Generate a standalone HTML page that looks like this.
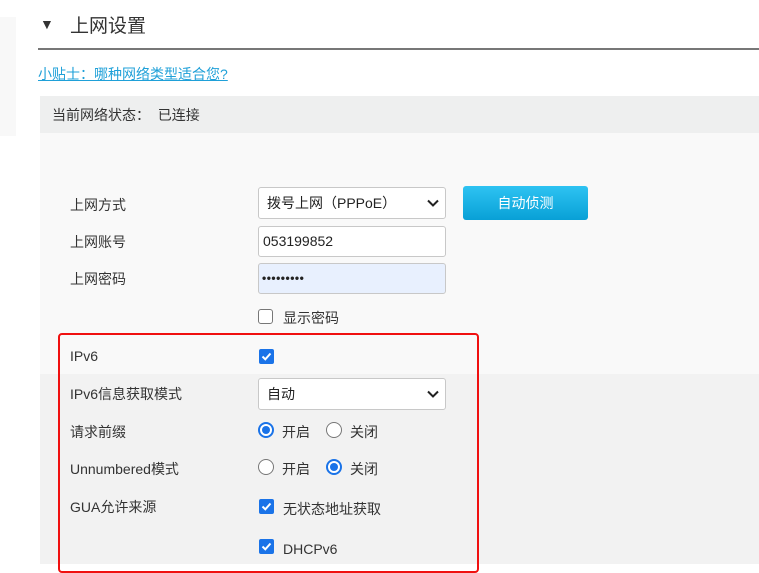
<!DOCTYPE html>
<html><head><meta charset="utf-8"><style>
*{box-sizing:border-box;margin:0;padding:0}
body{width:759px;height:564px;overflow:hidden;background:#fff;font-family:"Liberation Sans","Noto Sans CJK SC",sans-serif;font-size:14px;color:#333;position:relative}
.a{position:absolute}
.lbl{position:absolute;left:70px;font-size:14px;color:#333;line-height:20px}
.sel{position:absolute;left:258px;width:188px;height:32px;border:1px solid #c8c8c8;border-radius:3px;background:#fff;padding-left:8px;line-height:30px;font-size:14px;color:#222}
.sel svg{position:absolute;right:6px;top:11px}
.inp{position:absolute;left:258px;width:188px;height:31px;border:1px solid #c8c8c8;border-radius:3px;background:#fff;padding-left:4px;line-height:29px;font-size:14px;color:#222}
.cb{position:absolute;width:15px;height:15px;border-radius:2px;background:#1a73e8}
.cb svg{position:absolute;left:1px;top:1px}
.cbo{position:absolute;width:15px;height:15px;border-radius:3px;border:1.5px solid #777;background:#fff}
.rd{position:absolute;width:16px;height:16px;border-radius:50%;border:1.5px solid #777;background:#fff}
.rdon{position:absolute;width:16px;height:16px;border-radius:50%;border:2px solid #1a73e8;background:#fff}
.rdon::after{content:"";position:absolute;left:2px;top:2px;width:8px;height:8px;border-radius:50%;background:#1a73e8}
.t{position:absolute;font-size:14px;color:#333;line-height:20px}
</style></head><body>
<div class="a" style="left:0;top:17px;width:16px;height:119px;background:#f8f8f8"></div>
<div class="a" style="left:40px;top:16px;font-size:14px;color:#333">▼</div>
<div class="a" style="left:70px;top:14px;font-size:19px;color:#333;line-height:26px">上网设置</div>
<div class="a" style="left:38px;top:48px;width:721px;height:2px;background:#777"></div>
<div class="a" style="left:38px;top:65px;font-size:14px;color:#1fa0d8;text-decoration:underline;line-height:18px">小贴士：哪种网络类型适合您?</div>
<div class="a" style="left:40px;top:96px;width:719px;height:37px;background:#eeefef"></div>
<div class="a" style="left:52px;top:106px;font-size:14px;color:#333;line-height:18px">当前网络状态：&nbsp;&nbsp;已连接</div>
<div class="a" style="left:40px;top:133px;width:719px;height:241px;background:#f9f9f9"></div>
<div class="a" style="left:40px;top:374px;width:719px;height:190px;background:#f2f2f2"></div>

<div class="lbl" style="top:195px">上网方式</div>
<div class="sel" style="top:187px">拨号上网（PPPoE）<svg width="12" height="8" viewBox="0 0 12 8"><path d="M1 1.5L6 6.5L11 1.5" stroke="#222" stroke-width="2" fill="none"/></svg></div>
<div class="a" style="left:463px;top:186px;width:125px;height:34px;border-radius:3px;background:linear-gradient(#2ec3f2,#08a0d6);color:#fff;text-align:center;line-height:34px;font-size:14px">自动侦测</div>
<div class="lbl" style="top:232px">上网账号</div>
<div class="inp" style="top:226px">053199852</div>
<div class="lbl" style="top:269px">上网密码</div>
<div class="inp" style="top:263px;background:#e8f0fe;font-size:12px;font-weight:bold;letter-spacing:0.5px;padding-left:3px">•••••••••</div>
<div class="cbo" style="left:258px;top:309px"></div>
<div class="t" style="left:283px;top:308px">显示密码</div>

<div class="lbl" style="top:346px">IPv6</div>
<div class="cb" style="left:259px;top:349px"><svg width="13" height="13" viewBox="0 0 13 13"><path d="M2.5 6.5L5.3 9.3L10.5 3.5" stroke="#fff" stroke-width="2" fill="none"/></svg></div>
<div class="lbl" style="top:384px">IPv6信息获取模式</div>
<div class="sel" style="top:378px">自动<svg width="12" height="8" viewBox="0 0 12 8"><path d="M1 1.5L6 6.5L11 1.5" stroke="#222" stroke-width="2" fill="none"/></svg></div>
<div class="lbl" style="top:422px">请求前缀</div>
<div class="rdon" style="left:258px;top:422px"></div>
<div class="t" style="left:282px;top:422px">开启</div>
<div class="rd" style="left:326px;top:422px"></div>
<div class="t" style="left:350px;top:422px">关闭</div>
<div class="lbl" style="top:459px">Unnumbered模式</div>
<div class="rd" style="left:258px;top:459px"></div>
<div class="t" style="left:282px;top:459px">开启</div>
<div class="rdon" style="left:326px;top:459px"></div>
<div class="t" style="left:350px;top:459px">关闭</div>
<div class="lbl" style="top:497px">GUA允许来源</div>
<div class="cb" style="left:259px;top:499px"><svg width="13" height="13" viewBox="0 0 13 13"><path d="M2.5 6.5L5.3 9.3L10.5 3.5" stroke="#fff" stroke-width="2" fill="none"/></svg></div>
<div class="t" style="left:283px;top:499px">无状态地址获取</div>
<div class="cb" style="left:259px;top:539px"><svg width="13" height="13" viewBox="0 0 13 13"><path d="M2.5 6.5L5.3 9.3L10.5 3.5" stroke="#fff" stroke-width="2" fill="none"/></svg></div>
<div class="t" style="left:283px;top:539px">DHCPv6</div>

<div class="a" style="left:58px;top:333px;width:421px;height:240px;border:2px solid #f01010;border-radius:4px"></div>
</body></html>
